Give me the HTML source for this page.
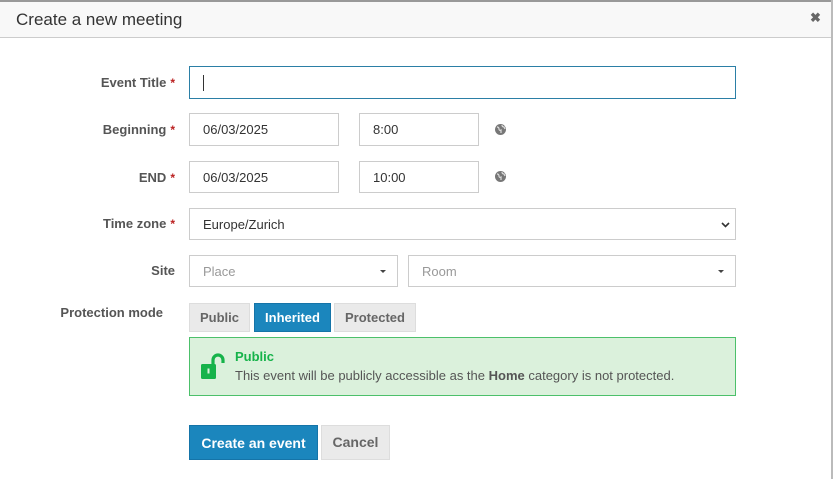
<!DOCTYPE html>
<html><head><style>
*{box-sizing:border-box;margin:0;padding:0}
body{width:833px;height:479px;overflow:hidden;background:#fff;font-family:"Liberation Sans",sans-serif;position:relative}
.a{position:absolute}
.top{left:0;top:0;width:833px;height:3px;background:#999}
.hdr{left:0;top:2px;width:831px;height:36px;background:#f8f8f8;border-bottom:1px solid #ccc}
.rb{left:831px;top:0;width:2px;height:479px;background:#bbb}
.title{left:16px;top:10px;font-size:17px;color:#333}
.x{left:810px;top:10px;font-size:13px;color:#666;font-weight:bold}
.lbl{font-size:13px;font-weight:bold;color:#555;text-align:right;width:175px;left:0}
.lbl b{color:#b22;margin-left:4px;font-size:12px}
.in{border:1px solid #ccc;background:#fff;font-size:13px;color:#333;padding-left:13px;display:flex;align-items:center}
.ph{color:#999}
.btn{font-size:13px;font-weight:bold;display:flex;align-items:center;justify-content:center;border:1px solid #ddd;background:#eaeaea;color:#666}
</style></head><body>
<div class="a top"></div>
<div class="a hdr"></div>
<div class="a rb"></div>
<div class="a title">Create a new meeting</div>
<div class="a x">✖</div>

<div class="a lbl" style="top:75px">Event Title<b>*</b></div>
<div class="a in" style="left:189px;top:66px;width:547px;height:33px;border-color:#2b7fa6"><span style="width:1px;height:16px;background:#333"></span></div>

<div class="a lbl" style="top:122px">Beginning<b>*</b></div>
<div class="a in" style="left:189px;top:113px;width:150px;height:33px">06/03/2025</div>
<div class="a in" style="left:359px;top:113px;width:120px;height:33px">8:00</div>
<svg class="a" style="left:494px;top:123px" width="13" height="13" viewBox="0 0 13 13"><circle cx="6.5" cy="6.5" r="5.5" fill="#777"/><path d="M3 4q2 0 2 2t2 1v3M8 2q0 2 2 2l1 2" stroke="#ddd" stroke-width="1.2" fill="none"/></svg>

<div class="a lbl" style="top:170px">END<b>*</b></div>
<div class="a in" style="left:189px;top:161px;width:150px;height:32px">06/03/2025</div>
<div class="a in" style="left:359px;top:161px;width:120px;height:32px">10:00</div>
<svg class="a" style="left:494px;top:170px" width="13" height="13" viewBox="0 0 13 13"><circle cx="6.5" cy="6.5" r="5.5" fill="#777"/><path d="M3 4q2 0 2 2t2 1v3M8 2q0 2 2 2l1 2" stroke="#ddd" stroke-width="1.2" fill="none"/></svg>

<div class="a lbl" style="top:216px">Time zone<b>*</b></div>
<div class="a in" style="left:189px;top:208px;width:547px;height:32px">Europe/Zurich<svg style="position:absolute;right:5px;top:13px" width="9" height="6" viewBox="0 0 9 6"><path d="M1 1l3.5 3.5L8 1" stroke="#333" stroke-width="1.6" fill="none"/></svg></div>

<div class="a lbl" style="top:263px">Site</div>
<div class="a in ph" style="left:189px;top:255px;width:209px;height:32px">Place<span style="position:absolute;right:11px;top:14px;border:3.5px solid transparent;border-top:3.5px solid #444"></span></div>
<div class="a in ph" style="left:408px;top:255px;width:328px;height:32px">Room<span style="position:absolute;right:11px;top:14px;border:3.5px solid transparent;border-top:3.5px solid #444"></span></div>

<div class="a lbl" style="top:305px;left:0;width:163px">Protection mode</div>
<div class="a btn" style="left:189px;top:303px;width:61px;height:29px">Public</div>
<div class="a btn" style="left:254px;top:303px;width:77px;height:29px;background:#1b86bd;border-color:#1574a8;color:#fff">Inherited</div>
<div class="a btn" style="left:334px;top:303px;width:82px;height:29px">Protected</div>

<div class="a" style="left:189px;top:337px;width:547px;height:59px;background:#dbf1dc;border:1px solid #4cc06a"></div>
<svg class="a" style="left:200px;top:352px" width="28" height="28" viewBox="0 0 28 28"><path d="M13 13V8a5 5 0 0 1 10 0v3" fill="none" stroke="#16b34a" stroke-width="3.2"/><rect x="1" y="12" width="15" height="15" rx="1.5" fill="#16b34a"/><rect x="7.5" y="16.5" width="2" height="5" fill="#dbf1dc"/></svg>
<div class="a" style="left:235px;top:349px;font-size:13px;font-weight:bold;color:#16b34a">Public</div>
<div class="a" style="left:235px;top:368px;font-size:13px;color:#555">This event will be publicly accessible as the <b>Home</b> category is not protected.</div>

<div class="a btn" style="left:189px;top:425px;width:129px;height:35px;background:#1b86bd;border-color:#1574a8;color:#fff;font-size:14px">Create an event</div>
<div class="a btn" style="left:321px;top:425px;width:69px;height:35px;font-size:14px;align-items:flex-start;padding-top:8px">Cancel</div>
</body></html>
